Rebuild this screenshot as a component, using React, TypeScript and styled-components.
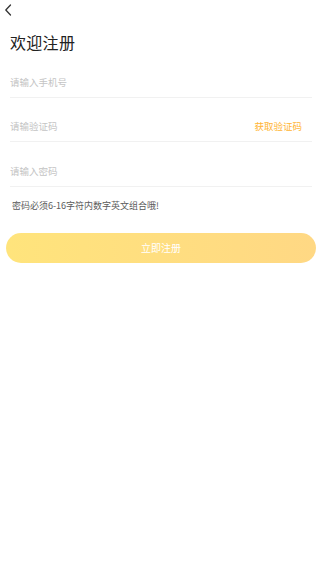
import React from "react";
import styled, { createGlobalStyle } from "styled-components";

const GlobalStyle = createGlobalStyle`
  html, body {
    margin: 0;
    padding: 0;
    background: #ffffff;
  }
  body {
    font-family: "Noto Sans CJK SC", "Noto Sans", sans-serif;
  }
  * {
    box-sizing: border-box;
  }
`;

const Page = styled.div`
  width: 320px;
  min-height: 577px;
  background: #ffffff;
  display: flex;
  flex-direction: column;
`;

const TopBar = styled.div`
  height: 20px;
  display: flex;
  align-items: center;
  padding-left: 2px;
`;

const BackButton = styled.button`
  border: none;
  background: none;
  padding: 0;
  width: 12px;
  height: 14px;
  display: flex;
  align-items: center;
  justify-content: center;
  cursor: pointer;
`;

const Title = styled.h1`
  margin: 11px 0 0 10px;
  font-size: 16px;
  line-height: 22px;
  font-weight: 400;
  color: #222222;
  letter-spacing: 0.3px;
`;

const Form = styled.div`
  display: flex;
  flex-direction: column;
  padding: 0 8px 0 10px;
`;

const Field = styled.div`
  height: 44.5px;
  padding-top: 14px;
  display: flex;
  align-items: center;
  justify-content: space-between;
  border-bottom: 1px solid #f1f1f1;
`;

const Input = styled.input`
  flex: 1;
  border: none;
  outline: none;
  padding: 0;
  font-family: inherit;
  font-size: 9.5px;
  color: #333333;
  background: transparent;
  &::placeholder {
    color: #c4c4c4;
  }
`;

const CodeLink = styled.span`
  font-size: 9.5px;
  color: #ffb534;
  margin-right: 10px;
`;

const Hint = styled.p`
  margin: 13px 0 0 12px;
  font-size: 9px;
  line-height: 12px;
  color: #5a5a5a;
`;

const SubmitButton = styled.button`
  margin: 21px 4px 0 6px;
  height: 30px;
  border: none;
  border-radius: 15px;
  background: linear-gradient(90deg, #ffe47c 0%, #ffd884 100%);
  color: #ffffff;
  font-family: inherit;
  font-size: 10px;
  cursor: pointer;
`;

const App: React.FC = () => {
  return (
    <>
      <GlobalStyle />
      <Page>
        <TopBar>
          <BackButton aria-label="返回">
            <svg width="8" height="12" viewBox="0 0 8 12">
              <path
                d="M6.5 1 L1.8 6 L6.5 11"
                fill="none"
                stroke="#333"
                strokeWidth="1.3"
                strokeLinecap="round"
                strokeLinejoin="round"
              />
            </svg>
          </BackButton>
        </TopBar>
        <Title>欢迎注册</Title>
        <Form>
          <Field>
            <Input placeholder="请输入手机号" />
          </Field>
          <Field>
            <Input placeholder="请输验证码" />
            <CodeLink>获取验证码</CodeLink>
          </Field>
          <Field>
            <Input type="password" placeholder="请输入密码" />
          </Field>
        </Form>
        <Hint>密码必须6-16字符内数字英文组合哦!</Hint>
        <SubmitButton>立即注册</SubmitButton>
      </Page>
    </>
  );
};

export default App;
